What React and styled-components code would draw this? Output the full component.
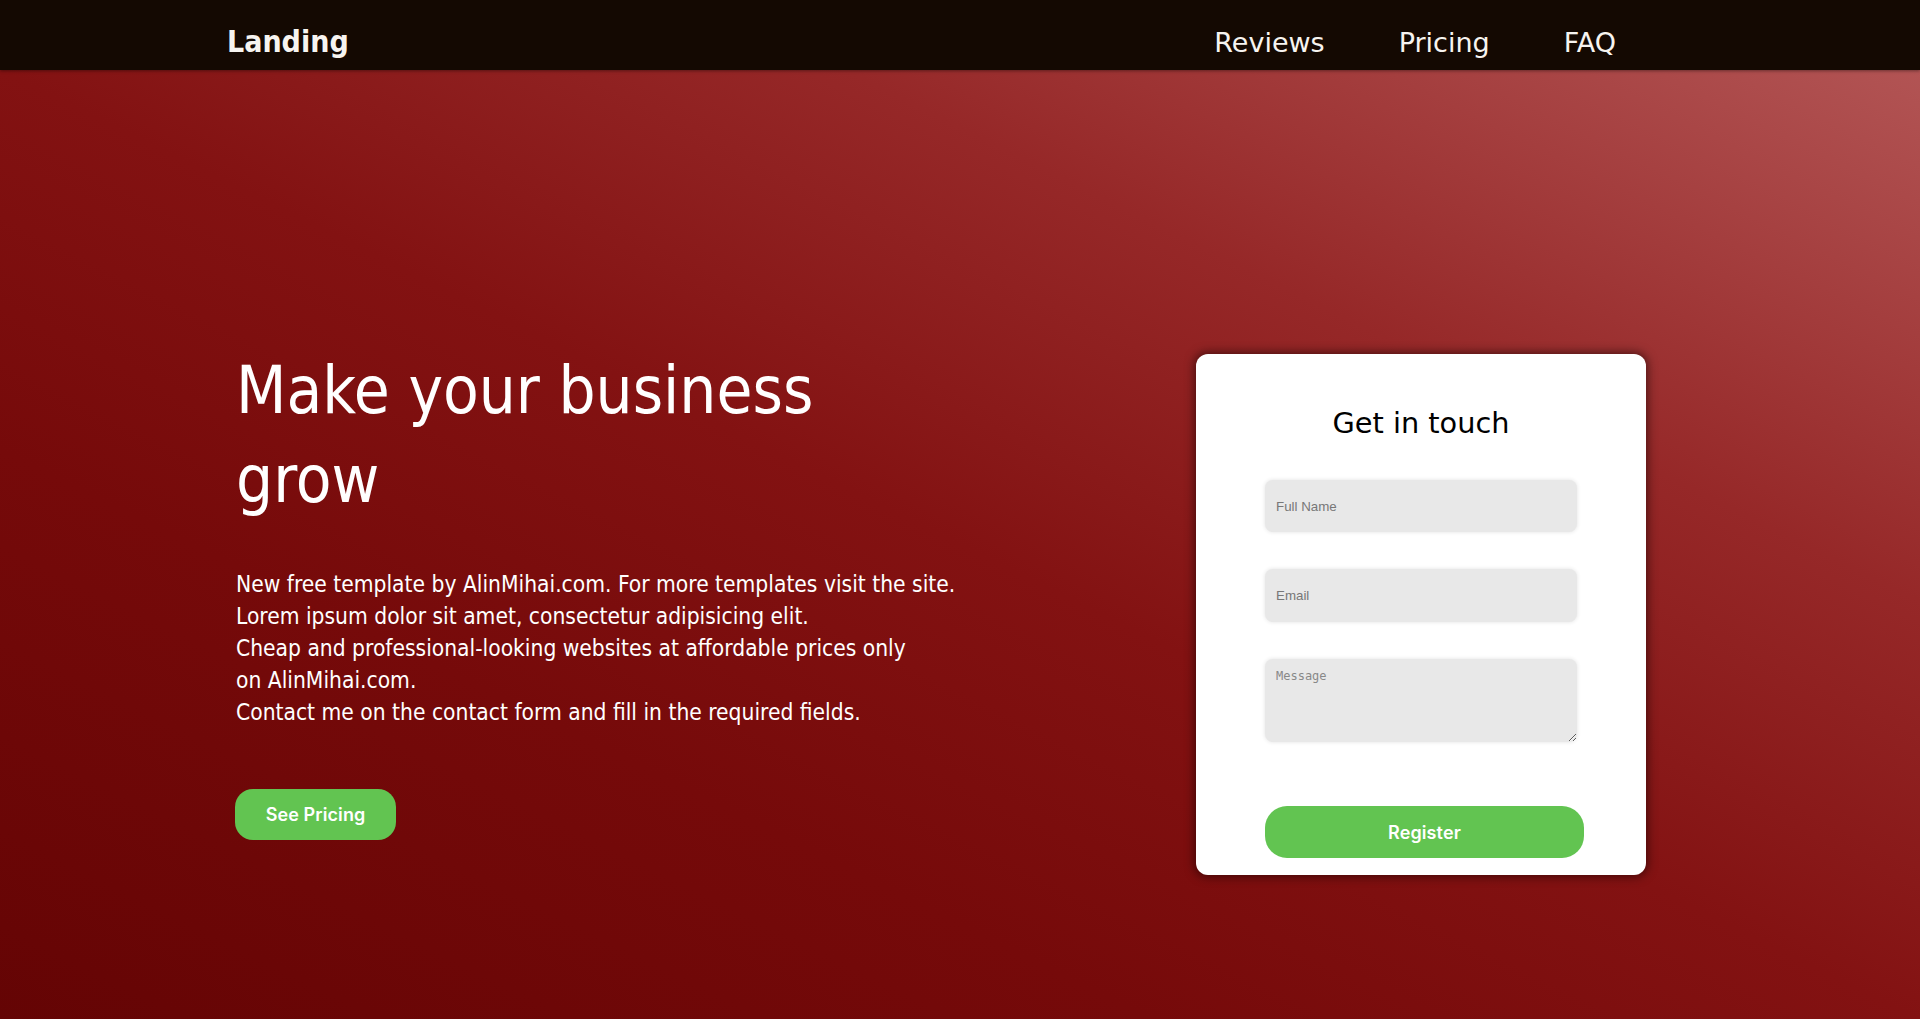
import React from "react";
import styled, { createGlobalStyle } from "styled-components";

const Global = createGlobalStyle`
  * { box-sizing: border-box; }
  html, body { margin: 0; padding: 0; }
  body {
    font-family: "DejaVu Sans Condensed", "DejaVu Sans", sans-serif;
    font-stretch: condensed;
    background: #640404;
  }
`;

const Page = styled.div`
  min-height: 1019px;
  display: flex;
  flex-direction: column;
`;

const NavBar = styled.nav`
  height: 70px;
  background: #140902;
  display: flex;
  align-items: baseline;
  padding: 24px 304px 0 227px;
  box-shadow: 0 1px 3px rgba(0, 0, 0, 0.4);
  position: relative;
  z-index: 1;
`;

const Brand = styled.a`
  font-family: "DejaVu Sans Condensed", "DejaVu Sans", sans-serif;
  font-stretch: condensed;
  font-weight: 700;
  font-size: 30px;
  color: #f7f4f0;
  text-decoration: none;
  margin-right: auto;
`;

const NavLinks = styled.div`
  display: flex;
  gap: 74px;
`;

const NavLink = styled.a`
  font-family: "DejaVu Sans", sans-serif;
  font-stretch: normal;
  font-size: 27px;
  color: #f7f4f0;
  text-decoration: none;
`;

const Hero = styled.section`
  flex: 1;
  display: flex;
  align-items: flex-start;
  padding: 276px 0 0 236px;
  background: linear-gradient(
    to top right,
    #640404 0%,
    #760a0a 30%,
    #831212 50%,
    #962828 72%,
    #b25454 100%
  );
`;

const Intro = styled.div`
  flex: 0 0 960px;
  color: #ffffff;
`;

const Title = styled.h1`
  margin: 0;
  font-weight: 400;
  font-size: 65px;
  line-height: 89px;
  width: 640px;
`;

const Lead = styled.p`
  margin: 44px 0 0;
  font-size: 22.6px;
  line-height: 32px;
  white-space: nowrap;
`;

const GreenButton = styled.button`
  border: none;
  background: #62c451;
  color: #ffffff;
  font-family: Inter, "Noto Sans", sans-serif;
  font-weight: 600;
  font-size: 18px;
  cursor: pointer;
  height: ${(p) => p.$h || 51}px;
  width: ${(p) => p.$w}px;
  border-radius: ${(p) => p.$r || 20}px;
  letter-spacing: 0.1px;
`;

const PricingButton = styled(GreenButton)`
  margin-top: 61px;
  margin-left: -1px;
  display: block;
`;

const Card = styled.form`
  margin-top: 8px;
  width: 450px;
  height: 521px;
  background: #ffffff;
  border-radius: 12px;
  box-shadow: 0 0 10px 2px rgba(20, 0, 0, 0.55);
  padding: 53px 62px 0 69px;
  display: flex;
  flex-direction: column;
  align-items: flex-start;
`;

const CardTitle = styled.h2`
  margin: 0 0 40px;
  align-self: stretch;
  margin-right: 7px;
  text-align: center;
  font-family: "DejaVu Sans", sans-serif;
  font-stretch: normal;
  font-weight: 400;
  font-size: 28.8px;
  line-height: 33px;
  color: #000;
`;

const fieldStyles = `
  display: block;
  width: 312px;
  border: none;
  outline: none;
  background: #e8e8e8;
  border-radius: 8px;
  box-shadow: 0 0 4px rgba(0, 0, 0, 0.12);
  color: #333;
`;

const Field = styled.input`
  ${fieldStyles}
  height: ${(p) => p.$h}px;
  margin-bottom: 37px;
  padding: 0 11px;
  font-family: "Liberation Sans", Arial, sans-serif;
  font-size: 13.33px;
  &::placeholder { color: #777; }
`;

const MessageBox = styled.textarea`
  ${fieldStyles}
  height: 83px;
  margin: 0 0 64px;
  padding: 10px 11px;
  font-family: "DejaVu Sans Mono", "Liberation Mono", monospace;
  font-size: 12px;
  resize: vertical;
  &::placeholder { color: #888; }
`;

export default function App() {
  return (
    <>
      <Global />
      <Page>
        <NavBar>
          <Brand href="#">Landing</Brand>
          <NavLinks>
            <NavLink href="#">Reviews</NavLink>
            <NavLink href="#">Pricing</NavLink>
            <NavLink href="#">FAQ</NavLink>
          </NavLinks>
        </NavBar>
        <Hero>
          <Intro>
            <Title>Make your business grow</Title>
            <Lead>
              New free template by AlinMihai.com. For more templates visit the site.
              <br />
              Lorem ipsum dolor sit amet, consectetur adipisicing elit.
              <br />
              Cheap and professional-looking websites at affordable prices only
              <br />
              on AlinMihai.com.
              <br />
              Contact me on the contact form and fill in the required fields.
            </Lead>
            <PricingButton type="button" $w={161} $h={51} $r={18}>
              See Pricing
            </PricingButton>
          </Intro>
          <Card onSubmit={(e) => e.preventDefault()}>
            <CardTitle>Get in touch</CardTitle>
            <Field type="text" placeholder="Full Name" $h={52} />
            <Field type="email" placeholder="Email" $h={53} />
            <MessageBox placeholder="Message" />
            <GreenButton type="submit" $w={319} $h={52} $r={22}>
              Register
            </GreenButton>
          </Card>
        </Hero>
      </Page>
    </>
  );
}
